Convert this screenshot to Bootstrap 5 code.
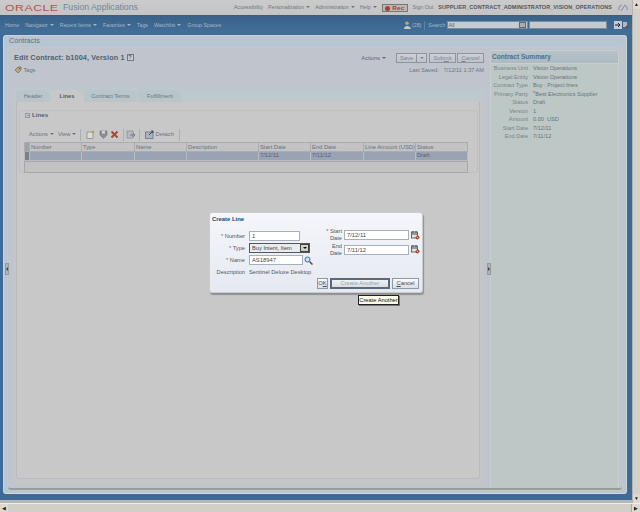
<!DOCTYPE html>
<html lang="en"><head><meta charset="utf-8"><title>Contracts</title>
<link href="https://cdn.jsdelivr.net/npm/bootstrap@5.3.0/dist/css/bootstrap.min.css" rel="stylesheet">
<style>
html,body{margin:0;width:640px;height:512px;overflow:hidden;background:#c9c9c9;font:5.7px/1.2 "Liberation Sans",Arial,sans-serif;color:#69727b}
a{color:inherit;text-decoration:none}
.shell{width:640px;height:512px;position:relative;filter:blur(.3px)}
.upper{height:503px}
.pagecol{width:632px;height:503px;display:flex;flex-direction:column;padding-bottom:3px;background:#b7b7b5}
.vbar{width:8px;height:503px;background:#e9e7e0;display:flex;flex-direction:column;border-left:1px solid #b5b3ac}
.vthumb{flex:1;background:#d4d0c8}
.sbtn{height:9px;flex:none;background:#ddd9d0;color:#222;display:flex;align-items:center;justify-content:center;font-size:5px;line-height:1;overflow:hidden}
.hbar{height:9px;background:#d4d0c8;display:flex;border-top:1px solid #eee}
.hthumb{flex:1;background:#d2cfc6;border-right:1px solid #aaa}
.hbar .sbtn{width:8px;height:8px}
.topbar{height:16px;flex:none;background:linear-gradient(#cbcbcb,#c4c4c4);padding:0 4px 0 5px;border-bottom:1px solid #4a5a66}
.brand{color:#b65050;font-size:9.6px;letter-spacing:.4px;transform:scaleX(1.28);transform-origin:left;width:58px;font-weight:400}
.suite{color:#70879c;font-size:8.7px;letter-spacing:0}
.tlinks{margin-left:auto;color:#6b7782;font-size:5.3px}
.tlinks>*{flex:none}
.gap-a{margin-left:5px}
.syncico{margin-left:6px}
.rec{width:26px;height:8px;background:#bcb6b6;border:1px solid #777;color:#a83a3a;font-weight:700;font-size:6.2px;text-align:right;padding-right:2px;line-height:6px;position:relative;letter-spacing:.3px}
.rec::before{content:"";position:absolute;left:2px;top:1px;width:5px;height:5px;border-radius:50%;background:#a83a3a}
.uname{font-weight:700;color:#4c5a60;font-size:5.5px;letter-spacing:.06px}
.navband{height:18px;flex:none;background:linear-gradient(#3a6289,#426f9a);color:#a3b7c9;padding:0 3px 0 5px;font-size:5.3px}
.caret{display:inline-block;border:2px solid transparent;border-top-color:currentColor;border-bottom:0;vertical-align:1px;margin-left:2px}
.navi{margin-left:6px}
.sel{width:81px;height:8px;background:#c5cbd2;border:1px solid #7f8b96;font-size:5.4px;padding-left:1px;line-height:6px;position:relative;color:#55606a}
.sel i{position:absolute;right:1px;top:0;width:7px;height:6px;background:#a8adb2;border:1px solid #666}
.sinput{width:78px;height:8px;background:#c4cad0;border:1px solid #7f8b96}
.navsep{width:1px;height:9px;background:#5d83a7;margin:0 3px}
.go{margin-left:7px}
.wrapband{flex:1;background:#3e6b96;padding:1px 5px 6px 3px;min-height:0}
.outer{height:100%;background:#b9c5d0;border:1px solid #cfd3d3;border-bottom-color:#d8d8d0;border-radius:3px;display:flex;flex-direction:column;padding:0 4px 3px 4px}
.ptitle{height:12px;flex:none;color:#5a7089;font-size:7.2px;line-height:10px;padding-left:1px}
.workrow{flex:1;min-height:0;background:#c0c4cc;border-radius:3px;border-bottom:2px solid #979ca2;display:flex;box-shadow:0 0 0 1px #c1c9d0}
.leftcol{width:478px;display:flex;flex-direction:column;padding:4px 2px 3px 6px;flex:none}
.rightcol{flex:1;background:#bcc7c6;margin:2px 3px 0 4px;border:1px solid #c8cfcf;border-bottom:0;border-radius:3px 3px 0 0}
.titleline{height:12px;flex:none}
.ptit{font-size:7.3px;font-weight:700;color:#4f6371;letter-spacing:.1px}
.help{display:inline-block;width:7px;height:7px;border:1px solid #6a7a86;font-size:5.6px;line-height:5px;text-align:center;margin-left:2px;vertical-align:1px;background:#c9ced2}
.acts{margin-left:auto;color:#5e6770;font-size:5.7px}
.btn.fbtn{--bs-btn-padding-y:0;--bs-btn-padding-x:0;--bs-btn-font-size:5.8px;--bs-btn-border-radius:0;height:10px;line-height:8px;color:#7c8791;background:linear-gradient(#cdd1d6,#bdc3c9);border:1px solid #8d969e;margin-left:2px;flex:none}
.btn.b-save{width:21px;margin-left:10px}
.btn.b-drop{width:10px;margin-left:0;border-left:0}
.btn.b-submit{width:27px}
.btn.b-cancel{width:27px;margin-left:1px}
.b-drop .caret{margin:0}
.tagline{height:10px;flex:none;margin-top:1px;color:#63707a}
.saved{margin-left:auto;font-size:5.6px;color:#6d767e}
.saved span{margin-left:5px}
.tabband{margin-top:12px;height:15px;flex:none;background:linear-gradient(#bcc8cd,#c0c8ce);padding:3px 0 0 3px;border-radius:3px 3px 0 0;margin-left:-1px}
.nav.tabset{border:0;height:12px;flex-wrap:nowrap;gap:1px}
.tabset .nav-link{padding:0;border:0;height:12px;line-height:12px;border-radius:3px 8px 0 0;text-align:center;background:#b9c5c9;color:#6a7983;font-size:5.7px}
.tabset .nav-link.active{background:#c8c8c8;color:#525c64;font-weight:700}
.t1{width:34px}.t2{width:32px}.t3{width:53px}.t4{width:44px}
.bandwrap{flex:1;min-height:0;margin-left:-1px;padding:0 5px 6px 3px;background:#c4c5c7;display:flex}
.tabbody{flex:1;background:#c8c8c8;padding:8px 1px 0 2px;border:1px solid #b7bbbf;border-top:0;border-radius:0 0 3px 3px;display:flex;flex-direction:column;min-height:0}
.linesbox{height:63px;flex:none;border:1px solid #bbc0c3;border-radius:3px;padding:0 9px 0 4px}
.sechead{height:17px;font-weight:700;color:#4f6371;font-size:6.2px;padding:0 0 0 1px}
.exp{display:inline-block;width:5px;height:5px;border:1px solid #8d9aa4;margin-right:2px;vertical-align:-1px;position:relative}
.exp::after{content:"";position:absolute;left:.5px;top:1px;border:1px solid transparent;border-top-color:#4f6371;border-bottom:0}
.tools{height:13px;color:#6b747c;font-size:5.8px;padding-left:5px;margin-bottom:1px}
.tools svg{display:block;flex:none}
.tools>*{flex:none}
.vsep{width:1px;height:12px;background:#a9afb3;flex:none}
.m4{margin-left:4px}.m5{margin-left:5px}.m2{margin-left:2px}.m1{margin-left:1px}
.tbl{width:444px;table-layout:fixed;border-collapse:collapse;margin:0;font-size:5.8px;--bs-table-bg:transparent;color:#6a7179}
.tbl th,.tbl td{height:9px;padding:0 0 0 1px;border:1px solid #aaadb0;font-weight:400;line-height:7px;overflow:hidden;white-space:nowrap;color:#6a7179}
.tbl th{background:#c3c3c6}
.tbl td{background:#9aa3b3;color:#59616c;border-color:#b7bcc4}
.tbl .hc{padding:0;background:#a2a2a4}
.tbl td.hc{background:#7c7f86}
.c0{width:5px}.c1,.c3,.c5,.c7{width:52px}.c2,.c6{width:53px}.c4{width:72px}
.totals{width:444px;height:12px;background:#c2c2c2;border:1px solid #a8a8a8}
.stitle{height:13px;background:linear-gradient(#b7c3c9,#adbac2);color:#53707f;font-size:6.6px;font-weight:700;padding:2px 0 0 1px;border-bottom:1px solid #c6d0d2}
.srow{height:8.5px;display:flex;font-size:5.6px;line-height:8.5px}
.srow dt{width:37px;text-align:right;font-weight:400;color:#7a8388;margin:0;flex:none;white-space:nowrap}
.srow dd{margin:0 0 0 5px;color:#6a7478;white-space:nowrap}
.mark0{color:#a8662e;font-size:6px;vertical-align:top;line-height:6px}
.handle{position:absolute;width:4px;height:12px;background:#aeb3b7;border:1px solid #999;top:263px;overflow:hidden}
.handle::after{content:"";position:absolute;top:3px;left:0;border:2px solid transparent;border-right-color:#444;border-left:0}
.handle.flip::after{border-right:0;border-left:2px solid #444}
.h-l{left:5px}.h-r{left:487px}
.dlg{position:absolute;left:209px;top:212px;width:214px;height:81px;border-radius:3px;background:linear-gradient(#f4f6fb,#e6e9f1);border:1px solid #c9ccd2;box-shadow:1px 2px 1px #8e9194;padding:3px 2px;color:#4e5860;font-size:5.7px}
.dtitle{font-weight:700;color:#1d4672;font-size:5.9px;height:14px}
.dgrid{display:grid;grid-template-columns:33px 1fr;column-gap:4px;align-items:center;grid-auto-rows:12px;width:104px;flex:none}
.dgrid label{text-align:right;color:#4e5860;margin:0;white-space:nowrap}
.star{color:#a0632b}
.form-control.fld{height:10px;min-height:0;border-radius:0;padding:0 0 0 2px;font-size:5.8px;line-height:8px;background-color:#fff;border:1px solid #a5b0bb;color:#3f474e}
.w-num{width:51px}.form-control.w-name{width:54px;flex:none}
.dtype{display:flex;height:10px;width:61px;border:1px solid #555;background:#e8ebf0;color:#3f474e;padding-left:2px;line-height:8px;justify-content:space-between}
.dtype i{width:9px;background:#cfcfc8;border:1px solid #444;display:flex;align-items:center;justify-content:center}
.dtype i::after{content:"";border:2px solid transparent;border-top-color:#111;border-bottom:0}
.rgrid{display:grid;grid-template-columns:17px 65px 9px;column-gap:2px;align-items:center;grid-auto-rows:14.5px;margin:-2px 0 0 9px;flex:none;height:30px}
.rgrid label{text-align:right;line-height:7px;margin:0;color:#4e5860;white-space:nowrap}
.dfoot{position:absolute;right:3px;bottom:3px;gap:2px}
.btn.dbtn{--bs-btn-padding-y:0;--bs-btn-padding-x:0;--bs-btn-font-size:5.8px;--bs-btn-border-radius:0;height:11px;line-height:9px;background:linear-gradient(#fafbfd,#d9dee6);border:1px solid #8f9aa5;color:#3f4a52}
.btn.dbtn.cur{border:2px solid #5a6a78;color:#9aa2ac;line-height:7px;background:linear-gradient(#f0f2f5,#d9dde3)}
.d1{width:11px}.d2{width:60px}.d3{width:27px}
.tip{position:absolute;left:358px;top:295px;width:41px;height:10px;background:#fbfbe6;border:1px solid #222;box-shadow:1px 1px 0 #777;color:#111;font-size:5.7px;line-height:8px;text-align:center;white-space:nowrap}
</style></head><body>
<div class="shell">
<div class="upper d-flex">
 <div class="pagecol">
  <header class="topbar d-flex align-items-center">
   <span class="brand">ORACLE</span><span class="suite">Fusion Applications</span>
   <nav class="tlinks d-flex align-items-center">
    <a href="#">Accessibility</a>
    <a href="#" class="gap-a">Personalization<i class="caret"></i></a>
    <a href="#" class="gap-a">Administration<i class="caret"></i></a>
    <a href="#" class="gap-a">Help<i class="caret"></i></a>
    <span class="rec gap-a">Rec</span>
    <a href="#" class="gap-a">Sign Out</a>
    <span class="uname gap-a">SUPPLIER_CONTRACT_ADMINISTRATOR_VISION_OPERATIONS</span>
    <svg class="syncico" width="10" height="8" viewBox="0 0 10 8"><path d="M1 6 A4 4 0 0 1 4 1M6 1A4 4 0 0 1 9 6M3 7l4-6" stroke="#8a98a6" stroke-width="1.2" fill="none"/></svg>
   </nav>
  </header>
  <div class="navband d-flex align-items-center">
   <a href="#">Home</a><a href="#" class="navi">Navigator<i class="caret"></i></a><a href="#" class="navi">Recent Items<i class="caret"></i></a><a href="#" class="navi">Favorites<i class="caret"></i></a><a href="#" class="navi">Tags</a><a href="#" class="navi">Watchlist<i class="caret"></i></a><a href="#" class="navi">Group Spaces</a>
   <div class="ms-auto d-flex align-items-center">
    <svg width="7" height="8" viewBox="0 0 7 8"><circle cx="3" cy="2.2" r="1.8" fill="#b9a878"/><path d="M0 8C0 4 6 4 7 8Z" fill="#c7c9cb"/></svg>
    <span class="ms-1">(28)</span><span class="navsep"></span><span>Search</span>
    <span class="sel ms-1">All<i></i></span>
    <span class="sinput ms-1"></span>
    <svg class="go" width="8" height="8" viewBox="0 0 8 8"><rect width="8" height="8" fill="#c3c9cf"/><path d="M1 4h5M4 2l2 2-2 2" stroke="#223" fill="none"/></svg>
    <svg width="7" height="8" viewBox="0 0 7 8"><rect x="1" y="1" width="4" height="5" fill="#aeb9c2"/><circle cx="5" cy="6" r="1.5" fill="#7a4a40"/></svg>
   </div>
  </div>
  <div class="wrapband">
   <section class="outer">
    <div class="ptitle">Contracts</div>
    <div class="workrow">
     <div class="leftcol">
      <div class="titleline d-flex align-items-center">
       <span class="ptit">Edit Contract: b1004, Version 1<span class="help">?</span></span>
       <a href="#" class="acts">Actions<i class="caret"></i></a>
       <button class="btn fbtn b-save">Save</button>
       <button class="btn fbtn b-drop"><i class="caret"></i></button>
       <button class="btn fbtn b-submit">Sub<u>m</u>it</button>
       <button class="btn fbtn b-cancel"><u>C</u>ancel</button>
      </div>
      <div class="tagline d-flex align-items-center">
       <svg width="8" height="8" viewBox="0 0 8 8" class="me-1"><path d="M1 4l3-3h3v3l-3 3z" fill="#b8a874" stroke="#6d6a55" stroke-width=".7"/><circle cx="5.6" cy="2.4" r=".7" fill="#556"/></svg>Tags
       <span class="saved">Last Saved:<span>7/12/11 1:37 AM</span></span>
      </div>
      <div class="tabband">
       <ul class="nav nav-tabs tabset">
        <li class="nav-item"><a class="nav-link t1" href="#">Header</a></li>
        <li class="nav-item"><a class="nav-link active t2" href="#">Lines</a></li>
        <li class="nav-item"><a class="nav-link t3" href="#">Contract Terms</a></li>
        <li class="nav-item"><a class="nav-link t4" href="#">Fulfillment</a></li>
       </ul>
      </div>
      <div class="bandwrap">
      <div class="tabbody">
       <div class="linesbox">
        <div class="sechead"><span class="exp"></span>Lines</div>
        <div class="tools d-flex align-items-center">
         <a href="#">Actions<i class="caret"></i></a><a href="#" class="m4">View<i class="caret"></i></a>
         <span class="vsep m4"></span>
         <svg width="9" height="9" viewBox="0 0 9 9" class="m5"><rect x="1" y="2" width="6" height="6.5" fill="#dcdcd5" stroke="#777" stroke-width=".6"/><path d="M7 0l.6 1.4L9 2l-1.4.6L7 4l-.6-1.4L5 2l1.4-.6z" fill="#b59a3e"/></svg>
         <svg width="9" height="9" viewBox="0 0 9 9" class="m4"><path d="M1 1h7v4L4.500 8.500 1 5z" fill="#8b8f9c" stroke="#666" stroke-width=".5"/><rect x="3" y="1" width="3" height="2.500" fill="#d7d7d7"/></svg>
         <svg width="9" height="9" viewBox="0 0 9 9" class="m2"><path d="M1.500 1.500l6 6M7.500 1.500l-6 6" stroke="#a94838" stroke-width="2"/></svg>
         <span class="vsep m4"></span>
         <svg width="9" height="9" viewBox="0 0 9 9" class="m2"><rect x="1" y="1" width="6" height="7" fill="#b6bac0" stroke="#7a7e84" stroke-width=".6"/><path d="M4 5h5M7 3l2 2-2 2" stroke="#6b7f8d" fill="none"/></svg>
         <span class="vsep m4"></span>
         <svg width="9" height="9" viewBox="0 0 9 9" class="m5"><rect x=".5" y="2" width="7.500" height="6.500" fill="#aab4bf" stroke="#5b6b7a" stroke-width=".7"/><path d="M4 5l4-4M6 1h2v2" stroke="#34485a" fill="none"/></svg>
         <a href="#" class="m1">Detach</a>
         <span class="vsep m5"></span>
        </div>
        <table class="table tbl">
         <colgroup><col class="c0"><col class="c1"><col class="c2"><col class="c3"><col class="c4"><col class="c5"><col class="c6"><col class="c7"><col></colgroup>
         <thead><tr><th class="hc"></th><th>Number</th><th>Type</th><th>Name</th><th>Description</th><th>Start Date</th><th>End Date</th><th class="text-end pe-1">Line Amount (USD)</th><th>Status</th></tr></thead>
         <tbody><tr><td class="hc"></td><td></td><td></td><td></td><td></td><td>7/12/11</td><td>7/11/12</td><td></td><td>Draft</td></tr></tbody>
        </table>
        <div class="totals"></div>
       </div>
      </div>
      </div>
     </div>
     <aside class="rightcol">
      <div class="stitle">Contract Summary</div>
      <dl class="m-0">
       <div class="srow"><dt>Business Unit</dt><dd>Vision Operations</dd></div>
       <div class="srow"><dt>Legal Entity</dt><dd>Vision Operations</dd></div>
       <div class="srow"><dt>Contract Type</dt><dd>Buy : Project lines</dd></div>
       <div class="srow"><dt>Primary Party</dt><dd><span class="mark0">*</span>Best Electronics Supplier</dd></div>
       <div class="srow"><dt>Status</dt><dd>Draft</dd></div>
       <div class="srow"><dt>Version</dt><dd>1</dd></div>
       <div class="srow"><dt>Amount</dt><dd>0.00 &nbsp;USD</dd></div>
       <div class="srow"><dt>Start Date</dt><dd>7/12/11</dd></div>
       <div class="srow"><dt>End Date</dt><dd>7/11/12</dd></div>
      </dl>
     </aside>
    </div>
   </section>
  </div>
 </div>
 <div class="vbar"><span class="sbtn">&#9650;</span><span class="vthumb"></span><span class="sbtn">&#9660;</span></div>
</div>
<div class="hbar"><span class="sbtn">&#9664;</span><span class="hthumb"></span><span class="sbtn">&#9654;</span></div>

<span class="handle h-l"></span>
<span class="handle flip h-r"></span>

<div class="dlg" role="dialog">
 <div class="dtitle">Create Line</div>
 <div class="d-flex">
  <div class="dgrid">
   <label><span class="star">*</span> Number</label><input class="form-control fld w-num" value="1">
   <label><span class="star">*</span> Type</label><span class="dtype">Buy Intent, Item<i></i></span>
   <label><span class="star">*</span> Name</label><span class="d-flex align-items-center gap-1"><input class="form-control fld w-name" value="AS18947"><svg width="9" height="9" viewBox="0 0 9 9" class="flex-none"><circle cx="3.500" cy="3.500" r="2.500" fill="#cfe0ee" stroke="#3b6d9c"/><path d="M5.500 5.500L8.500 8.500" stroke="#5a4a35" stroke-width="1.500"/></svg></span>
   <label>Description</label><span class="text-nowrap">Sentinel Deluxe Desktop</span>
  </div>
  <div class="rgrid">
   <label><span class="star">*</span> Start<br>Date</label><input class="form-control fld" value="7/12/11"><svg width="9" height="9" viewBox="0 0 9 9"><rect x=".5" y="1" width="6" height="6" fill="#e6e6e0" stroke="#44484d" stroke-width=".8"/><path d="M1 3h5M2 0v2M5 0v2" stroke="#44484d"/><circle cx="6.500" cy="6.500" r="2" fill="#b2492e"/><path d="M5.500 5.500l2 2" stroke="#fff" stroke-width=".6"/></svg>
   <label>End<br>Date</label><input class="form-control fld" value="7/11/12"><svg width="9" height="9" viewBox="0 0 9 9"><rect x=".5" y="1" width="6" height="6" fill="#e6e6e0" stroke="#44484d" stroke-width=".8"/><path d="M1 3h5M2 0v2M5 0v2" stroke="#44484d"/><circle cx="6.500" cy="6.500" r="2" fill="#b2492e"/><path d="M5.500 5.500l2 2" stroke="#fff" stroke-width=".6"/></svg>
  </div>
 </div>
 <div class="dfoot d-flex">
  <button class="btn dbtn d1">O<u>K</u></button>
  <button class="btn dbtn cur d2">Create Another</button>
  <button class="btn dbtn d3"><u>C</u>ancel</button>
 </div>
</div>
<div class="tip" role="tooltip">Create Another</div>
</div>
</body></html>
